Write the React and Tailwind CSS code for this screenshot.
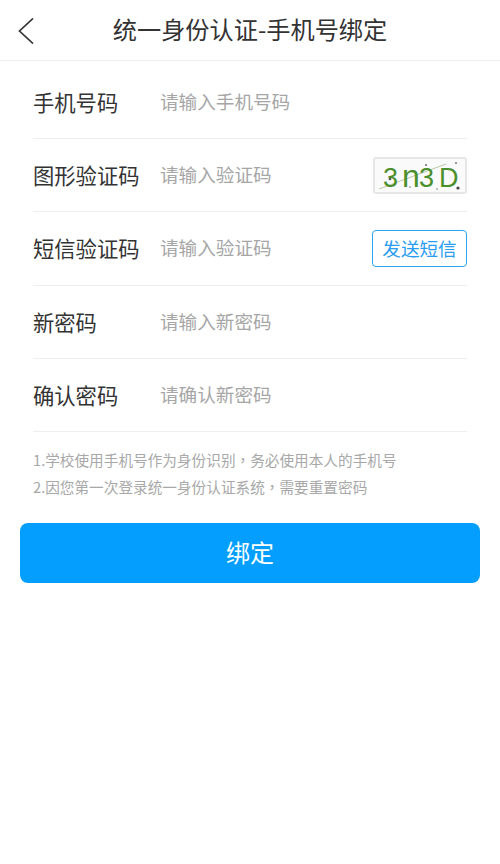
import React from 'react';

const font = { fontFamily: '"Noto Sans CJK SC", "Noto Sans", sans-serif' };

const rows = [
  { label: '手机号码', placeholder: '请输入手机号码', height: 'h-[78px] pt-[5px]' },
  { label: '图形验证码', placeholder: '请输入验证码', height: 'h-[73px]', extra: 'captcha' },
  { label: '短信验证码', placeholder: '请输入验证码', height: 'h-[74px]', extra: 'sms' },
  { label: '新密码', placeholder: '请输入新密码', height: 'h-[73px]' },
  { label: '确认密码', placeholder: '请确认新密码', height: 'h-[73px]' },
];

const Comma = () => <span style={{ fontFamily: '"Noto Sans CJK TC", sans-serif' }}>，</span>;

const Captcha = () => (
  <div className="w-[94px] h-[37px] mt-[1px] rounded-[3px] border-2 border-[#e6e6e6] bg-[#fafafa]">
    <svg className="overflow-visible" width="90" height="33" viewBox="0 0 90 33" fontFamily="Liberation Sans, sans-serif" fill="#4a8f2c">
      <line x1="4" y1="30" x2="71" y2="5" stroke="#b9c9a6" strokeWidth="1" />
      <text x="8" y="28" fontSize="27">3</text>
      <text x="27" y="28" fontSize="32">n</text>
      <text x="44" y="28" fontSize="27">3</text>
      <text x="64" y="28" fontSize="27">D</text>
      <circle cx="15" cy="20" r="1.3" fill="#555" />
      <circle cx="51" cy="6" r="1" fill="#666" />
      <circle cx="81" cy="4" r="1" fill="#777" />
      <circle cx="83" cy="29" r="1.6" fill="#444" />
      <circle cx="35" cy="28" r="0.8" fill="#777" />
      <circle cx="62" cy="30" r="0.8" fill="#777" />
    </svg>
  </div>
);

const App = () => {
  return (
    <div className="w-[500px] h-[864px] bg-white" style={font}>
      <div className="relative h-[61px] flex items-center justify-center border-b border-[#efefef]">
        <svg className="absolute left-[18px] top-[18px]" width="16" height="26" viewBox="0 0 16 26" fill="none">
          <path d="M15 .5 L1.5 13 L15 25.5" stroke="#333" strokeWidth="1.7" />
        </svg>
        <h1 className="text-[24.2px] text-[#333] leading-none font-normal pb-[2px]">统一身份认证-手机号绑定</h1>
      </div>

      <div className="px-[33px]">
        {rows.map((row) => (
          <div key={row.label} className={`flex items-center border-b border-[#eeeeee] ${row.height}`}>
            <span className="w-[127px] text-[21.3px] text-[#333] leading-none pb-[1px]">{row.label}</span>
            <span className="flex-1 text-[18.6px] text-[#a6a6a6] leading-none pb-[2px]">{row.placeholder}</span>
            {row.extra === 'captcha' && <Captcha />}
            {row.extra === 'sms' && (
              <div className="w-[95px] h-[37px] flex items-center justify-center rounded-[4px] border border-[#2aa5f0] text-[#2a9df0] text-[18.6px] leading-none">
                发送短信
              </div>
            )}
          </div>
        ))}
      </div>

      <div className="px-[33px] pt-[14px] text-[14.65px] leading-[27px] text-[#a8a8a8]">
        <p>1.学校使用手机号作为身份识别<Comma />务必使用本人的手机号</p>
        <p>2.因您第一次登录统一身份认证系统<Comma />需要重置密码</p>
      </div>

      <div className="px-5 mt-[23px]">
        <div className="h-[60px] rounded-[8px] bg-[#049ffe] flex items-center justify-center text-white text-[24px] leading-none pb-[3px]">
          绑定
        </div>
      </div>
    </div>
  );
};

export default App;
